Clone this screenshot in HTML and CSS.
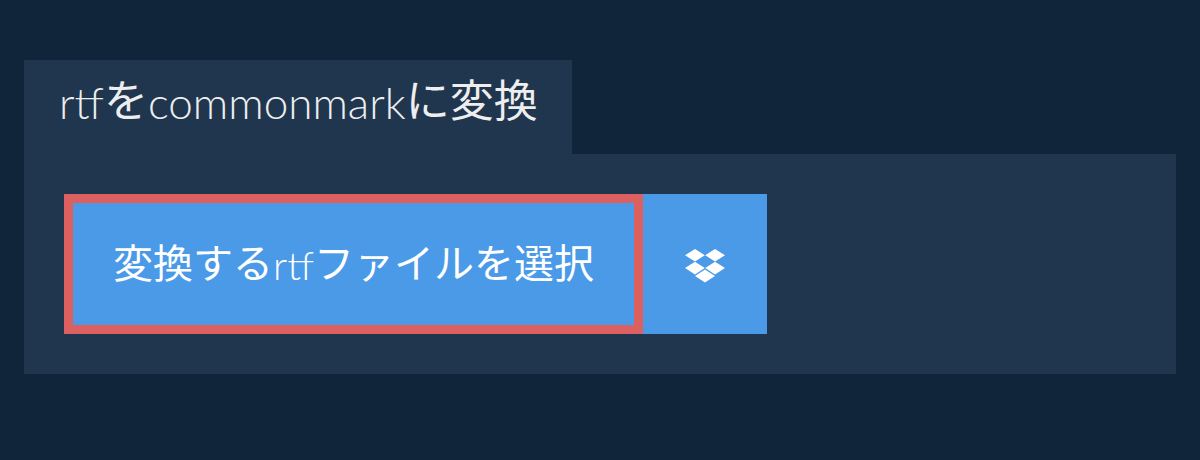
FILE: index.html
```html
<!DOCTYPE html>
<html lang="ja">
<head>
<meta charset="utf-8">
<title>rtfをcommonmarkに変換</title>
<link rel="stylesheet" href="styles.css">
</head>
<body>
<main class="page">
  <h1 class="tab">rtf<span class="ja">を</span>commonmark<span class="ja">に変換</span></h1>
  <section class="panel">
    <button class="pick"><span class="ja">変換する</span>rtf<span class="ja">ファイルを選択</span></button>
    <button class="dropbox" aria-label="Dropbox">
      <svg class="dropbox-icon" viewBox="0 0 40 34" width="40" height="34"><path fill="#fff" d="M10 0 0 6.300 10 12.600 19.800 6.300zM30 0 20.200 6.300 30 12.600 40 6.300zM10 12.800 0 19.100 10 25.400 19.800 19.100zM30 12.800 20.200 19.100 30 25.400 40 19.100zM20 20.500 10 26.900 20 33.500 30 26.900z"/></svg>
    </button>
  </section>
</main>
</body>
</html>
```
FILE: styles.css
```css
* { box-sizing: border-box; }
html, body { margin: 0; height: 100%; }
body {
  background: #10243a;
  font-family: Lato, "Noto Sans CJK JP", sans-serif;
}
.page { padding: 60px 24px 0; }
.tab {
  display: inline-block;
  vertical-align: top;
  margin: 0;
  height: 94px;
  padding: 16px 34px 0 35px;
  background: #20364f;
  color: #eeeeee;
  font-size: 44px;
  font-weight: 300;
  line-height: 48px;
}
.ja { font-weight: 400; vertical-align: 2px; }
.panel {
  display: flex;
  height: 220px;
  padding: 40px;
  background: #20364f;
}
button { margin: 0; font-family: inherit; cursor: pointer; color: #fff; }
.pick {
  width: 579px;
  height: 140px;
  background: #4b9ae8;
  border: 9px solid #dd6060;
  font-size: 40px;
  font-weight: 300;
  padding: 0 0 7px;
}
.dropbox {
  width: 124px;
  height: 140px;
  background: #4b9ae8;
  border: 0;
  padding: 4px 0 0;
  display: flex;
  align-items: center;
  justify-content: center;
}
```
